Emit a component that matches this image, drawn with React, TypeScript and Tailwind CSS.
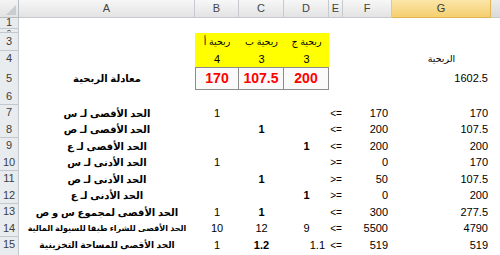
import React from "react";

type Cell = { v?: string; a?: "c" | "r"; b?: boolean };

const cols = ["A", "B", "C", "D", "E", "F", "G"];
const grid = "grid grid-cols-[19px_176px_44px_45px_45px_14px_49px_99px_1fr]";

// label, label size, B, C, D, sign, limit, used
const lims: [string, string, Cell, Cell, Cell, string, string, string][] = [
  ["الحد الأقصى لـ س", "text-[10px]", { v: "1" }, {}, {}, "<=", "170", "170"],
  ["الحد الأقصى لـ ص", "text-[10px]", {}, { v: "1", b: true }, {}, "<=", "200", "107.5"],
  ["الحد الأقصى لـ ع", "text-[10px]", {}, {}, { v: "1", b: true }, "<=", "200", "200"],
  ["الحد الأدنى لـ س", "text-[10px]", { v: "1" }, {}, {}, ">=", "0", "170"],
  ["الحد الأدنى لـ ص", "text-[10px]", {}, { v: "1", b: true }, {}, ">=", "50", "107.5"],
  ["الحد الأدنى لـ ع", "text-[10px]", {}, {}, { v: "1", b: true }, ">=", "0", "200"],
  ["الحد الأقصى لمجموع س و ص", "text-[10px]", { v: "1" }, { v: "1", b: true }, {}, "<=", "300", "277.5"],
  ["الحد الأقصى للشراء طبقا للسيولة المالية", "text-[8px]", { v: "10" }, { v: "12" }, { v: "9" }, "<=", "5500", "4790"],
  ["الحد الأقصى للمساحة التخزينية", "text-[9px]", { v: "1" }, { v: "1.2", b: true }, { v: "1.1", a: "r" }, "<=", "519", "519"],
];

function Row({ n, h, children }: { n: React.ReactNode; h: string; children?: React.ReactNode }) {
  return (
    <div className={`${grid} ${h}`}>
      <div className="flex items-center justify-center overflow-hidden bg-[#e9ecef] border-r border-b border-[#c3c8cf] text-[11px] leading-none text-[#3d3d3d]">
        {n}
      </div>
      {children}
    </div>
  );
}

function Val({ c }: { c: Cell }) {
  const j = c.a === "r" ? "justify-end pr-[4px]" : "justify-center";
  return (
    <div className={`flex items-center ${j} text-[11px] whitespace-nowrap ${c.b ? "font-bold" : ""}`}>{c.v}</div>
  );
}

export default function App() {
  return (
    <div className="w-[500px] h-[255px] overflow-hidden bg-white text-black font-['Liberation_Sans','DejaVu_Sans',sans-serif]">
      {/* column headers */}
      <div className={`${grid} h-[16px]`}>
        <div className="relative bg-gradient-to-b from-[#f4f4f4] to-[#e2e2e2] border-r border-b border-[#b7bcc3]">
          <div className="absolute right-[2px] bottom-[2px] w-0 h-0 border-l-[10px] border-l-transparent border-b-[10px] border-b-[#c9ccd1]" />
        </div>
        {cols.map((c) => (
          <div
            key={c}
            className={`flex items-center justify-center text-[11px] border-r border-b ${
              c === "G"
                ? "bg-gradient-to-b from-[#fbe5a8] to-[#f5cf6e] border-[#e0b552] text-[#3a3a3a]"
                : "bg-gradient-to-b from-[#f7f7f7] to-[#e3e3e3] border-[#c6c9ce] text-[#444]"
            }`}
          >
            {c}
          </div>
        ))}
        <div className="bg-gradient-to-b from-[#ececec] to-[#dadada] border-b border-[#c6c9ce]" />
      </div>

      <Row n="1" h="h-[13px]">
        <div className="col-span-8" />
      </Row>

      {/* row 2 is squeezed almost shut */}
      <Row n={<div className="w-[4px] h-[2px] border-t border-[#555] rounded-t-full" />} h="h-[4px]">
        <div className="col-span-8" />
      </Row>

      <Row n="3" h="h-[18px]">
        <div />
        {["ربحية أ", "ربحية ب", "ربحية ج"].map((t) => (
          <div key={t} dir="rtl" className="bg-[#ffff00] flex items-end justify-center text-[9.5px] whitespace-nowrap pb-[2px]">{t}</div>
        ))}
        <div className="col-span-4" />
      </Row>

      <Row n="4" h="h-[16px]">
        <div />
        {["4", "3", "3"].map((t, i) => (
          <div key={i} className="bg-[#ffff00] flex items-center justify-center text-[11px]">{t}</div>
        ))}
        <div />
        <div />
        <div dir="rtl" className="flex items-center justify-center text-[9.5px] whitespace-nowrap">الربحية</div>
        <div />
      </Row>

      <Row n="5" h="h-[21px]">
        <div dir="rtl" className="flex items-center justify-center text-[10px] font-bold whitespace-nowrap">معادلة الربحية</div>
        {["170", "107.5", "200"].map((t, i) => (
          <div
            key={t}
            className={`flex items-center justify-center text-[14px] font-bold text-[#ff0000] bg-[#fafafa] border-y border-r border-[#8c8c8c] ${i === 0 ? "border-l" : ""}`}
          >
            {t}
          </div>
        ))}
        <div />
        <div />
        <div className="flex items-center justify-end pr-[3px] text-[11px]">1602.5</div>
        <div />
      </Row>

      <Row n="6" h="h-[17px]">
        <div className="col-span-8" />
      </Row>

      {lims.map((r, i) => (
        <Row key={i} n={String(i + 7)} h={i % 2 === 0 ? "h-[16px]" : "h-[17px]"}>
          <div dir="rtl" className={`flex items-center justify-center ${r[1]} font-bold whitespace-nowrap overflow-hidden`}>{r[0]}</div>
          <Val c={r[2]} />
          <Val c={r[3]} />
          <Val c={r[4]} />
          <div className="flex items-center justify-center text-[10px]">{r[5]}</div>
          <div className="flex items-center justify-end pr-[4px] text-[11px]">{r[6]}</div>
          <div className="flex items-center justify-end pr-[3px] text-[11px]">{r[7]}</div>
          <div />
        </Row>
      ))}

      <Row n="" h="h-[10px]">
        <div className="col-span-8" />
      </Row>
    </div>
  );
}
